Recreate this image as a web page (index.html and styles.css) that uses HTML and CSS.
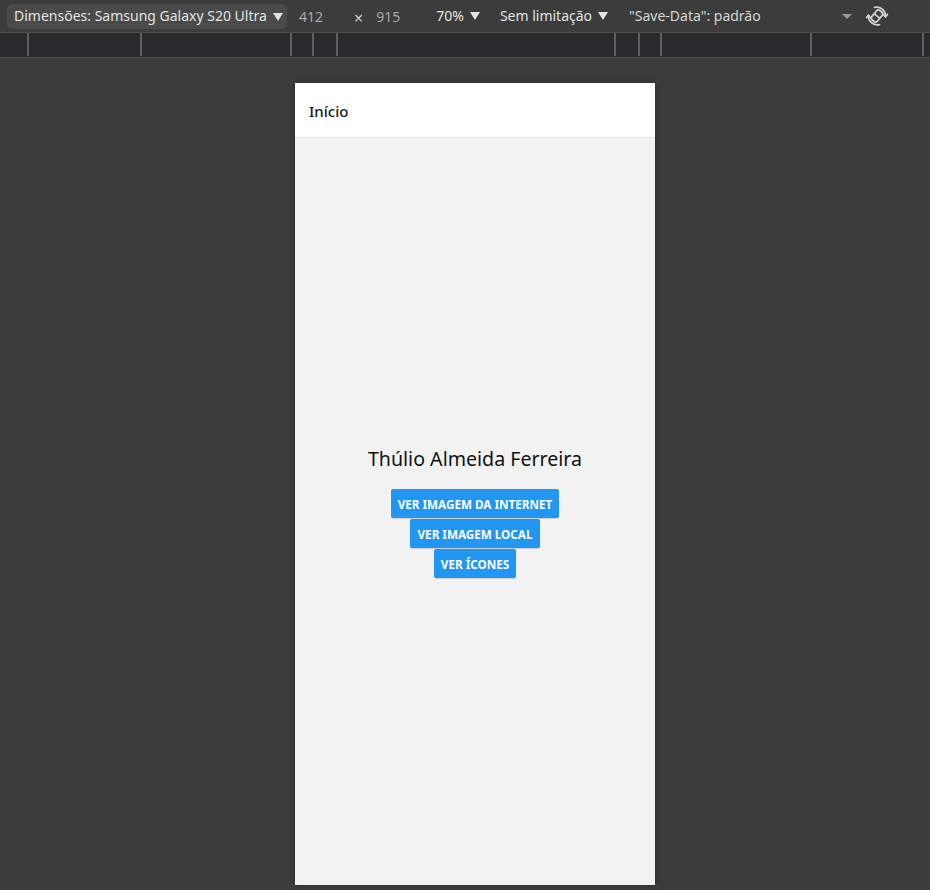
FILE: index.html
```html
<!DOCTYPE html>
<html lang="pt-BR">
<head>
<meta charset="utf-8">
<title>Início</title>
<link rel="stylesheet" href="styles.css">
</head>
<body>
<div class="toolbar">
  <div class="device-select">Dimensões: Samsung Galaxy S20 Ultra<span class="caret"></span></div>
  <span class="dim dim-w">412</span>
  <span class="times">×</span>
  <span class="dim dim-h">915</span>
  <span class="tb-item zoom">70%<span class="caret"></span></span>
  <span class="tb-item throttle">Sem limitação<span class="caret"></span></span>
  <span class="tb-item savedata">"Save-Data": padrão</span>
  <span class="more-caret"></span>
  <svg class="rotate" width="24" height="24" viewBox="0 0 24 24" fill="none" stroke="#d0d0d0" stroke-width="1.8" stroke-linecap="round" stroke-linejoin="round">
    <g transform="rotate(40 12 12)">
      <rect x="8.4" y="6" width="7.2" height="12" rx="2.2"/>
      <line x1="8.6" y1="12" x2="15.4" y2="12"/>
    </g>
    <path d="M9.5 3.4 A9 9 0 0 1 20.6 12.5"/>
    <path d="M18.6 10.6 L20.6 12.8 L22.4 10.4"/>
    <path d="M14.5 20.6 A9 9 0 0 1 3.4 11.5"/>
    <path d="M5.4 13.4 L3.4 11.2 L1.6 13.6"/>
  </svg>
</div>
<div class="ruler">
  <div class="seg s1"></div><div class="seg s2"></div><div class="seg s3"></div><div class="seg s4"></div><div class="seg s5"></div><div class="seg s6"></div><div class="seg s7"></div><div class="seg s8"></div><div class="seg s9"></div><div class="seg s10"></div>
</div>
<div class="stage">
  <div class="device">
    <header class="app-header">Início</header>
    <main class="app-content">
      <div class="name">Thúlio Almeida Ferreira</div>
      <button class="btn">VER IMAGEM DA INTERNET</button>
      <button class="btn">VER IMAGEM LOCAL</button>
      <button class="btn">VER ÍCONES</button>
    </main>
  </div>
</div>
</body>
</html>
```
FILE: styles.css
```css
html, body {
  margin: 0;
  padding: 0;
  background: #3c3c3c;
  width: 930px;
  height: 890px;
  overflow: hidden;
  font-family: "Noto Sans", "Open Sans", sans-serif;
}

.toolbar {
  height: 32px;
  display: flex;
  align-items: center;
  background: #3c3c3c;
  color: #e3e3e3;
  font-size: 14px;
}

.device-select {
  margin-left: 7px;
  height: 25px;
  box-sizing: border-box;
  padding: 0 0 0 7px;
  background: #4a4a4a;
  border-radius: 5px;
  display: flex;
  align-items: center;
  white-space: nowrap;
  width: 280px;
}

.caret {
  display: inline-block;
  width: 0;
  height: 0;
  border-left: 5px solid transparent;
  border-right: 5px solid transparent;
  border-top: 8px solid #e3e3e3;
  margin-left: 6px;
  vertical-align: middle;
  position: relative;
  top: -1px;
}

.tb-item, .device-select { line-height: 1; }
.device-select .caret { top: 1px; }

.dim {
  color: #a8a8a8;
}
.dim-w { margin-left: 12px; }
.times { margin-left: 31px; color: #d0d0d0; font-size: 16px; margin-top: 4px; }
.dim-h { margin-left: 13px; }

.tb-item { white-space: nowrap; }
.zoom { margin-left: 36px; }
.throttle { margin-left: 20px; }
.savedata { margin-left: 21px; color: #d6d6d6; }

.more-caret {
  margin-left: 81px;
  width: 0;
  height: 0;
  border-left: 5px solid transparent;
  border-right: 5px solid transparent;
  border-top: 5px solid #9a9a9a;
}

.rotate {
  margin-left: 13px;
}

.ruler {
  height: 24px;
  border-top: 1px solid #4f4f4f;
  border-bottom: 1px solid #4f4f4f;
  background: #292a2d;
  display: flex;
}

.seg {
  height: 23px;
  border-right: 2px solid #5e5e5e;
  flex: none;
}
.s1 { width: 27px; }
.s2 { width: 111px; }
.s3 { width: 148px; }
.s4 { width: 20px; }
.s5 { width: 22px; }
.s6 { width: 276px; }
.s7 { width: 22px; }
.s8 { width: 20px; }
.s9 { width: 148px; }
.s10 { width: 110px; }

.stage {
  padding-top: 25px;
  padding-left: 295px;
}

.device {
  width: 360px;
  height: 802px;
  background: #f2f2f2;
  display: flex;
  flex-direction: column;
  box-shadow: 0 0 6px rgba(0, 0, 0, 0.35);
}

.app-header {
  height: 55px;
  flex: none;
  box-sizing: border-box;
  background: #ffffff;
  border-bottom: 1px solid #e2e2e2;
  display: flex;
  align-items: center;
  padding-left: 14px;
  padding-top: 1px;
  font-size: 15px;
  font-weight: 500;
  color: #1a1a1a;
}

.app-content {
  flex: 1;
  display: flex;
  flex-direction: column;
  align-items: center;
  justify-content: center;
}

.name {
  font-size: 19.6px;
  line-height: 27px;
  color: #111111;
  margin-bottom: 16px;
}

.btn {
  font-family: "Noto Sans", "Open Sans", sans-serif;
  background: #2196f3;
  color: #ffffff;
  border: none;
  border-radius: 2px;
  height: 29px;
  padding: 0 7px;
  font-size: 11.7px;
  font-weight: 700;
  margin: 0 0 1px 0;
  box-shadow: 0 1px 1px rgba(0, 0, 0, 0.15);
  position: relative;
  top: 1px;
}
```
